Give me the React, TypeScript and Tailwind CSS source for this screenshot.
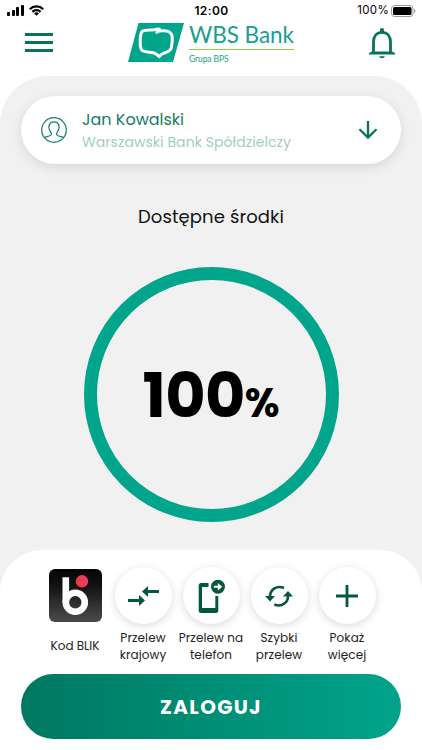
import React from "react";

const signalBars = ["h-[4px]", "h-[6px]", "h-[9px]", "h-[11px]"];

function StatusBar() {
  return (
    <div className="flex h-[21px] items-center justify-between pl-[7px] pr-[6px] font-['Inter',sans-serif] text-black">
      <div className="flex w-[100px] items-center gap-[5px]">
        <div className="flex items-end gap-[1.5px]">
          {signalBars.map((h) => (
            <span key={h} className={`w-[3px] rounded-[1px] bg-black ${h}`} />
          ))}
        </div>
        <svg width="15" height="11" viewBox="0 0 15 11" fill="none" stroke="black" strokeWidth="2.2">
          <path d="M.8 4.2a9.5 9.5 0 0 1 13.4 0" />
          <path d="M3.4 6.9a5.8 5.8 0 0 1 8.2 0" />
          <path d="M7.5 10.8 5.1 8.4a3.4 3.4 0 0 1 4.8 0Z" fill="black" stroke="none" />
        </svg>
      </div>
      <span className="text-[12px] font-semibold leading-none tracking-[0.4px]">12:00</span>
      <div className="flex w-[100px] items-center justify-end gap-[2px]">
        <span className="text-[11.5px] leading-none tracking-[0.3px]">100%</span>
        <svg width="25" height="12" viewBox="0 0 25 12">
          <rect x=".5" y=".5" width="21.5" height="11" rx="3" fill="white" stroke="#999" />
          <rect x="2" y="2" width="18.5" height="8" rx="1.5" fill="black" />
          <path d="M23.2 4v4q1.3-.6 1.3-2t-1.3-2" fill="#999" />
        </svg>
      </div>
    </div>
  );
}

function Logo() {
  return (
    <div className="flex h-[42px] items-start">
      <svg width="56" height="39" viewBox="0 0 56 39" className="mt-[2px]">
        <path d="M10.5 0H56L45 39H0Z" fill="#00a58b" />
        <path
          d="M31.500 6.200c-3.500-1-4 1-7 .9-4-.1-8-.3-10.300 1.400-2 1.600-2 5.500-2 10 0 4-.1 7.500 2.400 9.300 3.200 2 8 1 11.500 2.200 2.500.9 3.600 2 5 3.400 1.600-1.700 3-2.700 5.500-3.600 3.300-1 6-1.600 6.700-5 .7-4 1.300-8.800.7-12-.8-3.800-4-4.900-8-5.100-3-.1-5.500-.1-7.200 1.600"
          fill="none" stroke="white" strokeWidth="3" strokeLinecap="round"
        />
      </svg>
      <div className="ml-[5px] w-[105px] font-['Lato',sans-serif] text-[#17a091]">
        <div className="flex h-[28px] items-center whitespace-nowrap text-[22.5px] tracking-[-0.05px]">WBS Bank</div>
        <div className="h-[1px] bg-[#8dcb52]" />
        <div className="mt-[3px] whitespace-nowrap text-[8.5px] leading-[12px] tracking-[-0.1px]">Grupa BPS</div>
      </div>
    </div>
  );
}

function Header() {
  return (
    <header className="flex h-[55px] items-start justify-between pl-[25px] pr-[27px]">
      <div className="mt-[12px] flex w-[103px] flex-col gap-[5px]">
        <span className="h-[3px] w-[28px] bg-[#08725b]" />
        <span className="h-[3px] w-[28px] bg-[#08725b]" />
        <span className="h-[3px] w-[28px] bg-[#08725b]" />
      </div>
      <Logo />
      <svg width="26" height="32" viewBox="0 0 26 32" className="ml-[75px] mt-[6px]" fill="#08725b">
        <path d="M4.500 26V15C4.500 9 8 5.300 13 5.300S21.500 9 21.500 15v11" fill="none" stroke="#08725b" strokeWidth="2.800" />
        <path d="M0 27.500V26l3-1.500h20l3 1.500v1.500ZM11 5V3a2 2 0 0 1 4 0v2ZM10 29.300h6q-.8 2-3 2t-3-2" />
      </svg>
    </header>
  );
}

function AccountCard() {
  return (
    <div className="flex h-[68px] items-center rounded-full bg-white pl-[20px] pr-[23px] shadow-[0_3px_12px_rgba(0,0,0,0.11)]">
      <svg width="26" height="26" viewBox="0 0 26 26" fill="none" stroke="#147c65" strokeWidth="1.200">
        <circle cx="13" cy="13" r="12.300" />
        <path d="M3.200 20.500c2-.9 5.800-1 6.900-2.500 1-1.400-.2-2.500-1-4C8 12 7.500 9.500 8.400 7.500 9.200 5.700 10.900 4.800 13 4.800s3.800.9 4.600 2.700c.9 2 .4 4.500-.7 6.500-.8 1.500-2 2.600-1 4 1.100 1.500 4.900 1.600 6.900 2.500" />
      </svg>
      <div className="ml-[15px] flex-1 whitespace-nowrap">
        <div className="text-[16px] leading-[23px] text-[#147c65]">Jan Kowalski</div>
        <div className="text-[14px] leading-[22px] tracking-[0.07px] text-[#a2cdc2]">Warszawski Bank Spółdzielczy</div>
      </div>
      <svg width="20" height="20" viewBox="0 0 20 20" fill="none" stroke="#08725b" strokeWidth="2.300">
        <path d="M10 1v17M1.500 9.300 10 17.600l8.500-8.300" />
      </svg>
    </div>
  );
}

const transfer = (
  <svg width="31" height="20" viewBox="0 0 31 20" fill="#06583a">
    <path d="M0 13h11V9l6 5.500-6 5.500v-4H0ZM31 4H20V0l-6 5.500 6 5.500V7h11Z" />
  </svg>
);
const phone = (
  <svg width="28" height="36" viewBox="0 0 28 36">
    <rect x="1.700" y="5" width="19.600" height="30" rx="2.500" fill="#06583a" />
    <path d="M5 9h13.300v21H5Z" fill="white" />
    <path d="M11.500 4h12v14h-7l-5-6Z" fill="white" />
    <circle cx="21" cy="8.700" r="7" fill="#06583a" />
    <path d="M16.800 7.700h4V5l4.500 3.700-4.500 3.700V9.700h-4Z" fill="white" />
  </svg>
);
const refresh = (
  <svg width="28" height="24" viewBox="0 0 28 24" fill="none" stroke="#06583a" strokeWidth="2.600">
    <path d="M5 13C4.800 6 11.500.8 19 4M23 11.500C23.200 18.500 17 23.500 9.300 20.500" />
    <path d="M0 12h10l-5 5.500ZM18 12.500h10L23 7Z" fill="#06583a" stroke="none" />
  </svg>
);
const plus = (
  <svg width="22" height="22" viewBox="0 0 22 22" stroke="#06583a" strokeWidth="2.800"><path d="M11 0v22M0 11h22" /></svg>
);

const actions = [
  { lines: ["Przelew", "krajowy"], icon: transfer },
  { lines: ["Przelew na", "telefon"], icon: phone },
  { lines: ["Szybki", "przelew"], icon: refresh },
  { lines: ["Pokaż", "więcej"], icon: plus },
];

function Blik() {
  return (
    <div className="flex w-[68px] flex-col items-center">
      <svg width="53" height="53" viewBox="0 0 53 53" className="mt-[2px]">
        <defs>
          <linearGradient id="tile" x1="0" y1="0" x2="0" y2="1"><stop stopColor="#050505" /><stop offset=".3" stopColor="#111" /><stop offset="1" stopColor="#4b4b4b" /></linearGradient>
          <linearGradient id="dot"><stop stopColor="#ed3b35" /><stop offset="1" stopColor="#e83c75" /></linearGradient>
        </defs>
        <rect width="53" height="53" rx="6" fill="url(#tile)" />
        <path d="M16.800 8.300V33.500" stroke="white" strokeWidth="6.600" />
        <circle cx="26.300" cy="33.300" r="9.500" fill="none" stroke="white" strokeWidth="6.600" />
        <circle cx="33" cy="12.300" r="6.200" fill="url(#dot)" />
      </svg>
      <span className="mt-[15px] whitespace-nowrap text-[12px] leading-[18px] text-[#222]">Kod BLIK</span>
    </div>
  );
}

export default function App() {
  return (
    <div className="h-[750px] w-[422px] overflow-hidden bg-white font-['Poppins','Inter',sans-serif]">
      <StatusBar />
      <Header />
      <main className="flex h-[674px] flex-col rounded-t-[48px] bg-[#f1f1f1]">
        <div className="px-[21px] pt-[20px]">
          <AccountCard />
        </div>
        <h1 className="mt-[39px] text-center text-[18px] leading-[28px] tracking-[0.1px] text-[#111]">Dostępne środki</h1>
        <div className="mx-auto mt-[36px] flex h-[255px] w-[255px] shrink-0 items-center justify-center rounded-full border-[13px] border-[#00a58b]">
          <div className="flex items-baseline whitespace-nowrap pt-[2px] font-bold leading-none text-black">
            <span className="text-[62px] tracking-[-0.7px]">100</span>
            <span className="text-[40px]">%</span>
          </div>
        </div>
        <section className="mt-[28px] h-[200px] shrink-0 rounded-t-[42px] bg-white px-[21px] pt-[17px]">
          <div className="flex h-[107px] justify-center">
            <Blik />
            {actions.map(({ lines, icon }) => (
              <div key={lines[0]} className="flex w-[68px] flex-col items-center">
                <div className="flex h-[57px] w-[57px] items-center justify-center rounded-full bg-white shadow-[0_2px_9px_rgba(0,0,0,0.15)]">{icon}</div>
                <div className="mt-[5px] whitespace-nowrap text-center text-[12px] leading-[17px] tracking-[0.1px] text-[#222]">
                  {lines[0]}<br />{lines[1]}
                </div>
              </div>
            ))}
          </div>
          <button className="flex h-[65px] w-full items-center justify-center rounded-full bg-linear-to-r from-[#007861] to-[#00a48b] text-[20px] font-bold tracking-[1.300px] text-white">ZALOGUJ</button>
        </section>
      </main>
    </div>
  );
}
